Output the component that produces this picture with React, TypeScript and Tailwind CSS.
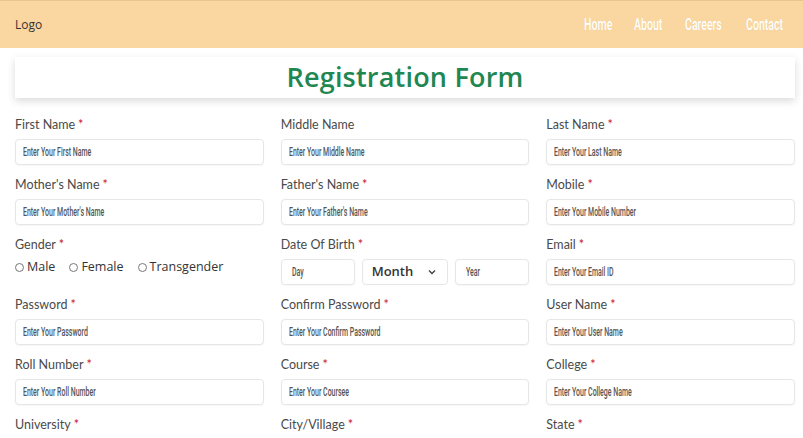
import React from 'react';

// --- Static Data ---

const NAV = [
  { label: 'Home', w: 'w-[28px]' },
  { label: 'About', w: 'w-[29px]' },
  { label: 'Careers', w: 'w-[39px]' },
  { label: 'Contact', w: 'w-[39px]' },
];

type Field = { label: string; placeholder?: string; required?: boolean; kind?: 'gender' | 'dob' };

const FIELDS: Field[] = [
  { label: 'First Name', placeholder: 'Enter Your First Name', required: true },
  { label: 'Middle Name', placeholder: 'Enter Your Middle Name' },
  { label: 'Last Name', placeholder: 'Enter Your Last Name', required: true },
  { label: "Mother's Name", placeholder: "Enter Your Mother's Name", required: true },
  { label: "Father's Name", placeholder: "Enter Your Father's Name", required: true },
  { label: 'Mobile', placeholder: 'Enter Your Mobile Number', required: true },
  { label: 'Gender', required: true, kind: 'gender' },
  { label: 'Date Of Birth', required: true, kind: 'dob' },
  { label: 'Email', placeholder: 'Enter Your Email ID', required: true },
  { label: 'Password', placeholder: 'Enter Your Password', required: true },
  { label: 'Confirm Password', placeholder: 'Enter Your Confirm Password', required: true },
  { label: 'User Name', placeholder: 'Enter Your User Name', required: true },
  { label: 'Roll Number', placeholder: 'Enter Your Roll Number', required: true },
  { label: 'Course', placeholder: 'Enter Your Coursee', required: true },
  { label: 'College', placeholder: 'Enter Your College Name', required: true },
  { label: 'University', placeholder: 'Enter Your University Name', required: true },
  { label: 'City/Village', placeholder: 'Enter Your City/Village', required: true },
  { label: 'State', placeholder: 'Enter Your State', required: true },
];

// --- Sub-Components ---

// placeholder text is a tall condensed face: squeeze Roboto horizontally
const Box = ({ text, className = '' }: { text: string; className?: string }) => (
  <div className={`h-[26px] flex items-center px-[7px] bg-white border border-[#e6e6e6] rounded-[4px] shadow-[0_1px_2px_rgba(0,0,0,0.04)] overflow-hidden ${className}`}>
    <span className="inline-block origin-left scale-x-[0.58] font-['Roboto',sans-serif] font-medium text-[12px] text-[#555] whitespace-nowrap">
      {text}
    </span>
  </div>
);

const Gender = () => (
  <div className="h-[26px] flex items-start gap-[14px] font-['Open_Sans',sans-serif] text-[12.5px] text-[#333]">
    {['Male', 'Female', 'Transgender'].map((g) => (
      <label key={g} className="flex items-center gap-[3px] leading-[16px]">
        <span className="w-[9px] h-[9px] rounded-full border border-[#777] inline-block" />
        {g}
      </label>
    ))}
  </div>
);

const Dob = () => (
  <div className="flex gap-[7px]">
    <Box text="Day" className="w-[74px] px-[10px]" />
    <div className="w-[86px] h-[26px] flex items-center justify-between pl-[9px] pr-[10px] bg-white border border-[#e6e6e6] rounded-[4px]">
      <span className="font-['Open_Sans',sans-serif] font-semibold text-[13px] text-[#333]">Month</span>
      <svg width="10" height="10" viewBox="0 0 10 10" fill="none" stroke="#444" strokeWidth="1.4">
        <path d="M2 3.5 L5 6.5 L8 3.5" />
      </svg>
    </div>
    <Box text="Year" className="flex-1 px-[10px]" />
  </div>
);

const FormField = ({ field }: { field: Field }) => (
  <div>
    <div className="font-['Lato',sans-serif] text-[12.5px] leading-[16px] text-[#4a4a4a] mb-[6px]">
      {field.label}
      {field.required && <span className="text-[#c8102e] ml-[3px]">*</span>}
    </div>
    {field.kind === 'gender' ? <Gender /> : field.kind === 'dob' ? <Dob /> : <Box text={field.placeholder || ''} />}
  </div>
);

// --- Main Component ---

export default function App() {
  return (
    <div className="min-h-screen bg-white">
      <header className="h-12 bg-[#fad7a0] border-t border-[#e9c58e] flex items-center justify-between pl-[15px] pr-[18px]">
        <span className="font-['Open_Sans',sans-serif] text-[12px] text-[#333]">Logo</span>
        <nav className="flex items-center gap-[22px]">
          {NAV.map((item) => (
            <span key={item.label} className={`${item.w} whitespace-nowrap`}>
              <span className="inline-block origin-left scale-x-[0.66] font-['Roboto',sans-serif] font-medium text-[16px] text-white [text-shadow:0_0_1px_rgba(0,0,0,0.08)]">
                {item.label}
              </span>
            </span>
          ))}
        </nav>
      </header>

      <main className="pl-[15px] pr-[8px]">
        <div className="mt-[9px] h-[41px] bg-white shadow-[0_3px_8px_rgba(0,0,0,0.15)] flex items-center justify-center">
          <h1 className="font-['Open_Sans',sans-serif] font-semibold text-[27px] text-[#1e8752] tracking-[0.2px]">
            Registration Form
          </h1>
        </div>

        <div className="grid grid-cols-3 gap-x-[17px] gap-y-[12px] mt-[19px]">
          {FIELDS.map((f) => (
            <FormField key={f.label} field={f} />
          ))}
        </div>
      </main>
    </div>
  );
}
